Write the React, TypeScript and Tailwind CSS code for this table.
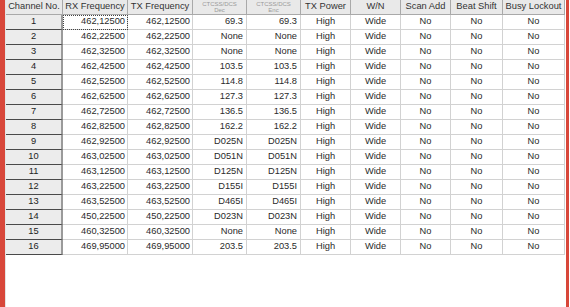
import React from 'react';

interface Row {
  ch: number;
  rx: string;
  tx: string;
  dec: string;
  enc: string;
}

const rows: Row[] = [
  { ch: 1, rx: '462,12500', tx: '462,12500', dec: '69.3', enc: '69.3' },
  { ch: 2, rx: '462,22500', tx: '462,22500', dec: 'None', enc: 'None' },
  { ch: 3, rx: '462,32500', tx: '462,32500', dec: 'None', enc: 'None' },
  { ch: 4, rx: '462,42500', tx: '462,42500', dec: '103.5', enc: '103.5' },
  { ch: 5, rx: '462,52500', tx: '462,52500', dec: '114.8', enc: '114.8' },
  { ch: 6, rx: '462,62500', tx: '462,62500', dec: '127.3', enc: '127.3' },
  { ch: 7, rx: '462,72500', tx: '462,72500', dec: '136.5', enc: '136.5' },
  { ch: 8, rx: '462,82500', tx: '462,82500', dec: '162.2', enc: '162.2' },
  { ch: 9, rx: '462,92500', tx: '462,92500', dec: 'D025N', enc: 'D025N' },
  { ch: 10, rx: '463,02500', tx: '463,02500', dec: 'D051N', enc: 'D051N' },
  { ch: 11, rx: '463,12500', tx: '463,12500', dec: 'D125N', enc: 'D125N' },
  { ch: 12, rx: '463,22500', tx: '463,22500', dec: 'D155I', enc: 'D155I' },
  { ch: 13, rx: '463,52500', tx: '463,52500', dec: 'D465I', enc: 'D465I' },
  { ch: 14, rx: '450,22500', tx: '450,22500', dec: 'D023N', enc: 'D023N' },
  { ch: 15, rx: '460,32500', tx: '460,32500', dec: 'None', enc: 'None' },
  { ch: 16, rx: '469,95000', tx: '469,95000', dec: '203.5', enc: '203.5' },
];

const grid = 'grid grid-cols-[57px_65px_65px_54px_54px_50px_50px_50px_52px_62px]';
const head = 'h-[15px] flex items-center justify-center border-r border-b border-[#a9a9a9] bg-[#e9e9e9] text-[#333] overflow-hidden';
const cell = 'h-[15px] flex items-center border-r border-b border-[#d2d2d2] text-[#2a2a2a]';

// the two tone columns have a two-line caption squeezed into one row
const ToneHeader = ({ last }: { last: string }) => (
  <div className={head}>
    <div className="flex flex-col items-center text-[6px] leading-[6.5px] text-[#9a9a9a]">
      <span>CTCSS/DCS</span>
      <span>{last}</span>
    </div>
  </div>
);

const App = () => {
  return (
    <div className="w-[570px] h-[307px] bg-white flex font-['Liberation_Sans',Arial,sans-serif] text-[9.3px] overflow-hidden">
      <div className="w-[5px] h-full bg-[#d8473a]" />
      <div className="w-[1px] h-full bg-[#e4e4e4]" />
      <div className="w-[559px] h-full">
        <div className={grid}>
          <div className={head}>Channel No.</div>
          <div className={head}>RX Frequency</div>
          <div className={head}>TX Frequency</div>
          <ToneHeader last="Dec" />
          <ToneHeader last="Enc" />
          <div className={head}>TX Power</div>
          <div className={head}>W/N</div>
          <div className={head}>Scan Add</div>
          <div className={head}>Beat Shift</div>
          <div className={head}>Busy Lockout</div>

          {rows.map((r) => (
            <React.Fragment key={r.ch}>
              <div className="h-[15px] flex items-center justify-center bg-[#ececec] border-b border-b-[#4a4a4a] border-r-2 border-r-[#9a9a9a] text-[#222]">
                {r.ch}
              </div>
              <div className={`${cell} justify-end pr-[2px] ${r.ch === 1 ? 'outline outline-1 outline-dotted outline-[#444] -outline-offset-1' : ''}`}>
                {r.rx}
              </div>
              <div className={`${cell} justify-end pr-[2px]`}>{r.tx}</div>
              <div className={`${cell} justify-end pr-[3px]`}>{r.dec}</div>
              <div className={`${cell} justify-end pr-[3px]`}>{r.enc}</div>
              <div className={`${cell} justify-center`}>High</div>
              <div className={`${cell} justify-center`}>Wide</div>
              <div className={`${cell} justify-center`}>No</div>
              <div className={`${cell} justify-center`}>No</div>
              <div className={`${cell} justify-center`}>No</div>
            </React.Fragment>
          ))}
        </div>
      </div>
      <div className="w-[1px] h-full bg-white" />
      <div className="w-[3px] h-full bg-[#d8473a]" />
      <div className="w-[1px] h-full bg-white" />
    </div>
  );
};

export default App;
